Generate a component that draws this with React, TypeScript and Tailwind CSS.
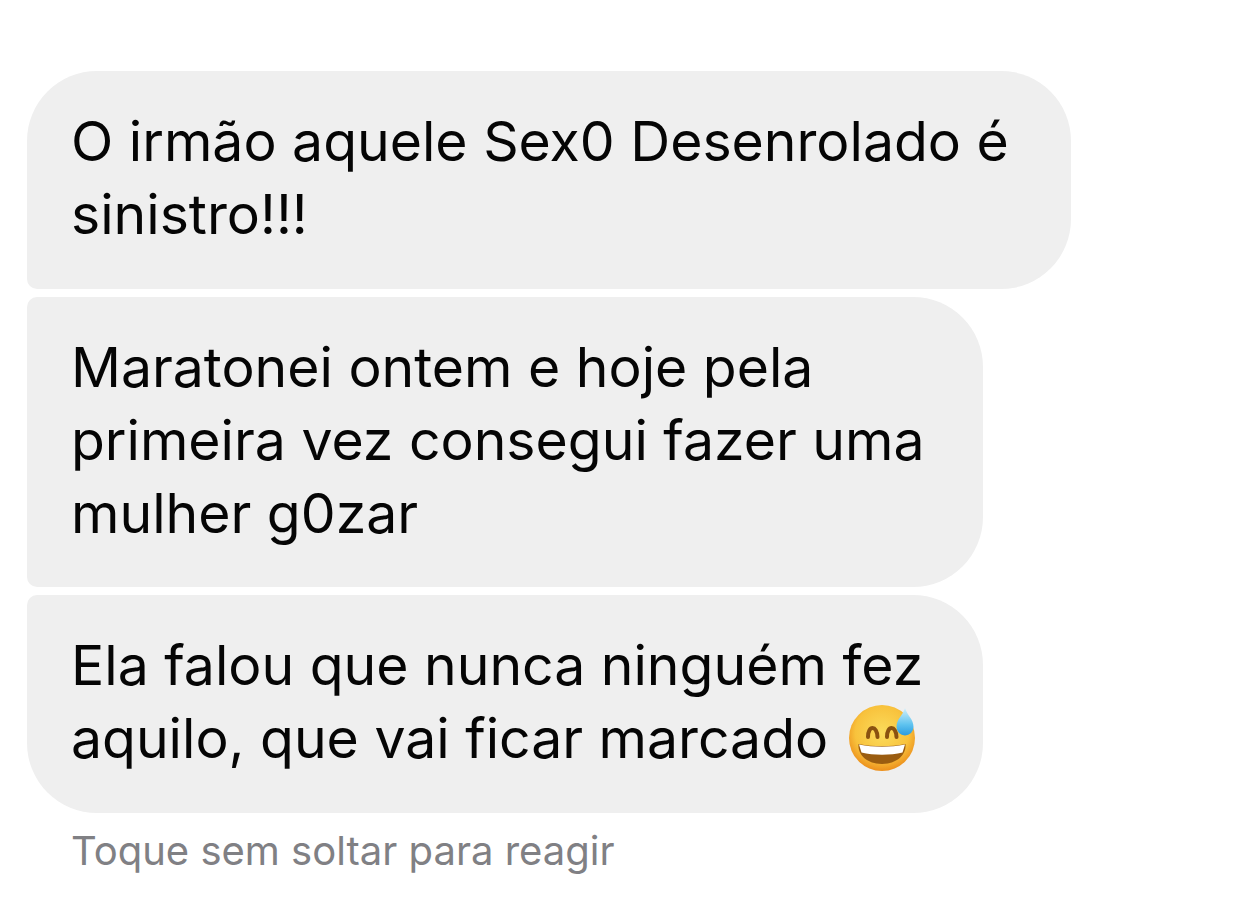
const font = { fontFamily: "Inter, Roboto, sans-serif" };
function Bubble({ lines, w, h, cls }: { lines: React.ReactNode[]; w: string; h: string; cls: string }) {
  return (
    <div className={`${w} ${h} ${cls} bg-[#efefef] pl-[44px] pt-[33px] text-[55.3px] leading-[73px] text-[#050505] whitespace-nowrap`}>
      {lines.map((l, i) => <div key={i}>{l}</div>)}
    </div>
  );
}
function Emoji() {
  return (
    <svg width="70" height="70" viewBox="0 0 70 70" className="block mt-[1px]">
      <defs>
        <radialGradient id="f" cx="0.5" cy="0.42" r="0.58"><stop offset="0" stopColor="#fbdc5c"/><stop offset="0.7" stopColor="#f8c23c"/><stop offset="1" stopColor="#ec8f1c"/></radialGradient>
        <linearGradient id="d" x1="0" y1="0" x2="0" y2="1"><stop offset="0" stopColor="#d3f0fb"/><stop offset="0.6" stopColor="#5fc3ef"/><stop offset="1" stopColor="#2a9be0"/></linearGradient>
      </defs>
      <circle cx="34" cy="36" r="33" fill="url(#f)"/>
      <path d="M20 35c0-12 9-12 9.500 0M39 35c0-12 9-12 9.500 0" fill="none" stroke="#8a5210" strokeWidth="4" strokeLinecap="round"/>
      <path d="M10.500 42c15 3 32 3 47 0c1 11-9 20-23.500 20S9.500 53 10.500 42z" fill="#9a5c10"/>
      <path d="M11 42.500c15 3 31 3 46 0l-2.500 8c-12 3-29 3-41 0z" fill="#fff"/>
      <path d="M57 6c2.500 8 8.500 11 8.500 19a8.500 8.500 0 0 1-17 0c0-8 6-11 8.500-19z" fill="url(#d)"/>
    </svg>
  );
}
export default function App() {
  return (
    <div style={font} className="w-[1242px] h-[921px] bg-white overflow-hidden pl-[27px] pt-[71px]">
      <div className="flex flex-col gap-[8px]">
        <Bubble w="w-[1044px]" h="h-[218px]" cls="rounded-[70px] rounded-bl-[10px]" lines={["O irmão aquele Sex0 Desenrolado é", "sinistro!!!"]} />
        <Bubble w="w-[956px]" h="h-[290px]" cls="rounded-[70px] rounded-l-[10px]" lines={["Maratonei ontem e hoje pela", "primeira vez consegui fazer uma", "mulher g0zar"]} />
        <Bubble w="w-[956px]" h="h-[218px]" cls="rounded-[70px] rounded-tl-[10px]" lines={["Ela falou que nunca ninguém fez", <span className="flex items-start gap-[20px]">aquilo, que vai ficar marcado <Emoji /></span>]} />
      </div>
      <div className="pl-[44px] pt-[15px] text-[40px] leading-[46px] text-[#808084]">Toque sem soltar para reagir</div>
    </div>
  );
}
